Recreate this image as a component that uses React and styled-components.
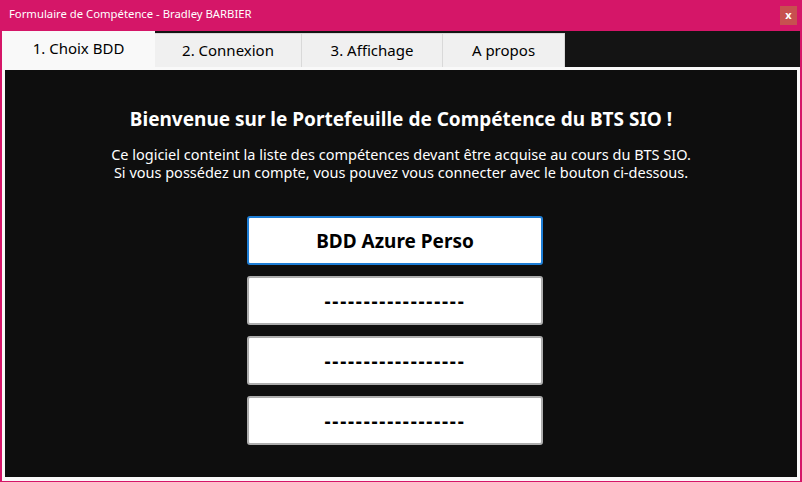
import React from 'react'
import styled, { createGlobalStyle } from 'styled-components'

const GlobalStyle = createGlobalStyle`
  html, body {
    margin: 0;
    padding: 0;
    background: #d51668;
  }
  * { box-sizing: border-box; }
`

const Window = styled.div`
  width: 802px;
  height: 482px;
  background: #d51668;
  display: flex;
  flex-direction: column;
  padding: 0 2px 1px 2px;
  font-family: "Segoe UI", "Noto Sans", "Open Sans", sans-serif;
  overflow: hidden;
`

const TitleBar = styled.div`
  height: 31px;
  flex: none;
  display: flex;
  align-items: center;
  justify-content: space-between;
  padding: 0 3px 4px 7px;
  color: #fff;
  font-size: 11.3px;
`

const CloseButton = styled.div`
  width: 17px;
  height: 19px;
  margin-top: 4px;
  background: #c75050;
  color: #fff;
  font-size: 11px;
  font-weight: bold;
  display: flex;
  align-items: center;
  justify-content: center;
  line-height: 1;
  padding-bottom: 2px;
`

const Body = styled.div`
  flex: 1;
  background: #141414;
  display: flex;
  flex-direction: column;
`

const TabStrip = styled.div`
  height: 36px;
  flex: none;
  display: flex;
  align-items: flex-end;
`

const Tab = styled.div`
  width: ${p => p.w}px;
  height: ${p => (p.active ? 36 : 34)}px;
  background: ${p => (p.active ? '#f9f9f9' : '#f0f0f0')};
  border: 1px solid ${p => (p.active ? '#f9f9f9' : '#d9d9d9')};
  border-bottom: none;
  border-left-width: ${p => (p.active ? 1 : 0)}px;
  display: flex;
  align-items: center;
  justify-content: center;
  padding-bottom: ${p => (p.active ? 3 : 1)}px;
  font-size: 15px;
  color: #000;
`

const Panel = styled.div`
  flex: 1;
  background: #0e0e0e;
  border: 3px solid #f9f9f9;
  border-bottom: 4px solid #f9f9f9;
  display: flex;
  flex-direction: column;
  align-items: center;
  padding-top: 36px;
  color: #fff;
`

const Heading = styled.h1`
  margin: 0;
  font-size: 19px;
  line-height: 26px;
  font-weight: bold;
`

const Intro = styled.p`
  margin: 14px 0 0;
  font-size: 14.5px;
  line-height: 17.5px;
  text-align: center;
`

const ButtonList = styled.div`
  margin: 35px 12px 0 0;
  display: flex;
  flex-direction: column;
  gap: 11px;
`

const DbButton = styled.div`
  width: 296px;
  height: 49px;
  background: #fff;
  border: 2px solid ${p => (p.focused ? '#1e7ed6' : '#adadad')};
  border-radius: 3px;
  display: flex;
  align-items: center;
  justify-content: center;
  color: #000;
  font-size: 19px;
  font-weight: bold;
  letter-spacing: ${p => (p.dashes ? '1.75px' : '0')};
`

const tabs = [
  { label: '1. Choix BDD', w: 153 },
  { label: '2. Connexion', w: 147 },
  { label: '3. Affichage', w: 141 },
  { label: 'A propos', w: 122 },
]

const dash = '------------------'
const buttons = ['BDD Azure Perso', dash, dash, dash]

export default function App() {
  return (
    <>
      <GlobalStyle />
      <Window>
        <TitleBar>
          <span>Formulaire de Compétence - Bradley BARBIER</span>
          <CloseButton>x</CloseButton>
        </TitleBar>
        <Body>
          <TabStrip>
            {tabs.map((t, i) => (
              <Tab key={t.label} w={t.w} active={i === 0}>{t.label}</Tab>
            ))}
          </TabStrip>
          <Panel>
            <Heading>Bienvenue sur le Portefeuille de Compétence du BTS SIO !</Heading>
            <Intro>
              Ce logiciel conteint la liste des compétences devant être acquise au cours du BTS SIO.
              <br />
              Si vous possédez un compte, vous pouvez vous connecter avec le bouton ci-dessous.
            </Intro>
            <ButtonList>
              {buttons.map((b, i) => (
                <DbButton key={i} focused={i === 0} dashes={b === dash}>{b}</DbButton>
              ))}
            </ButtonList>
          </Panel>
        </Body>
      </Window>
    </>
  )
}
